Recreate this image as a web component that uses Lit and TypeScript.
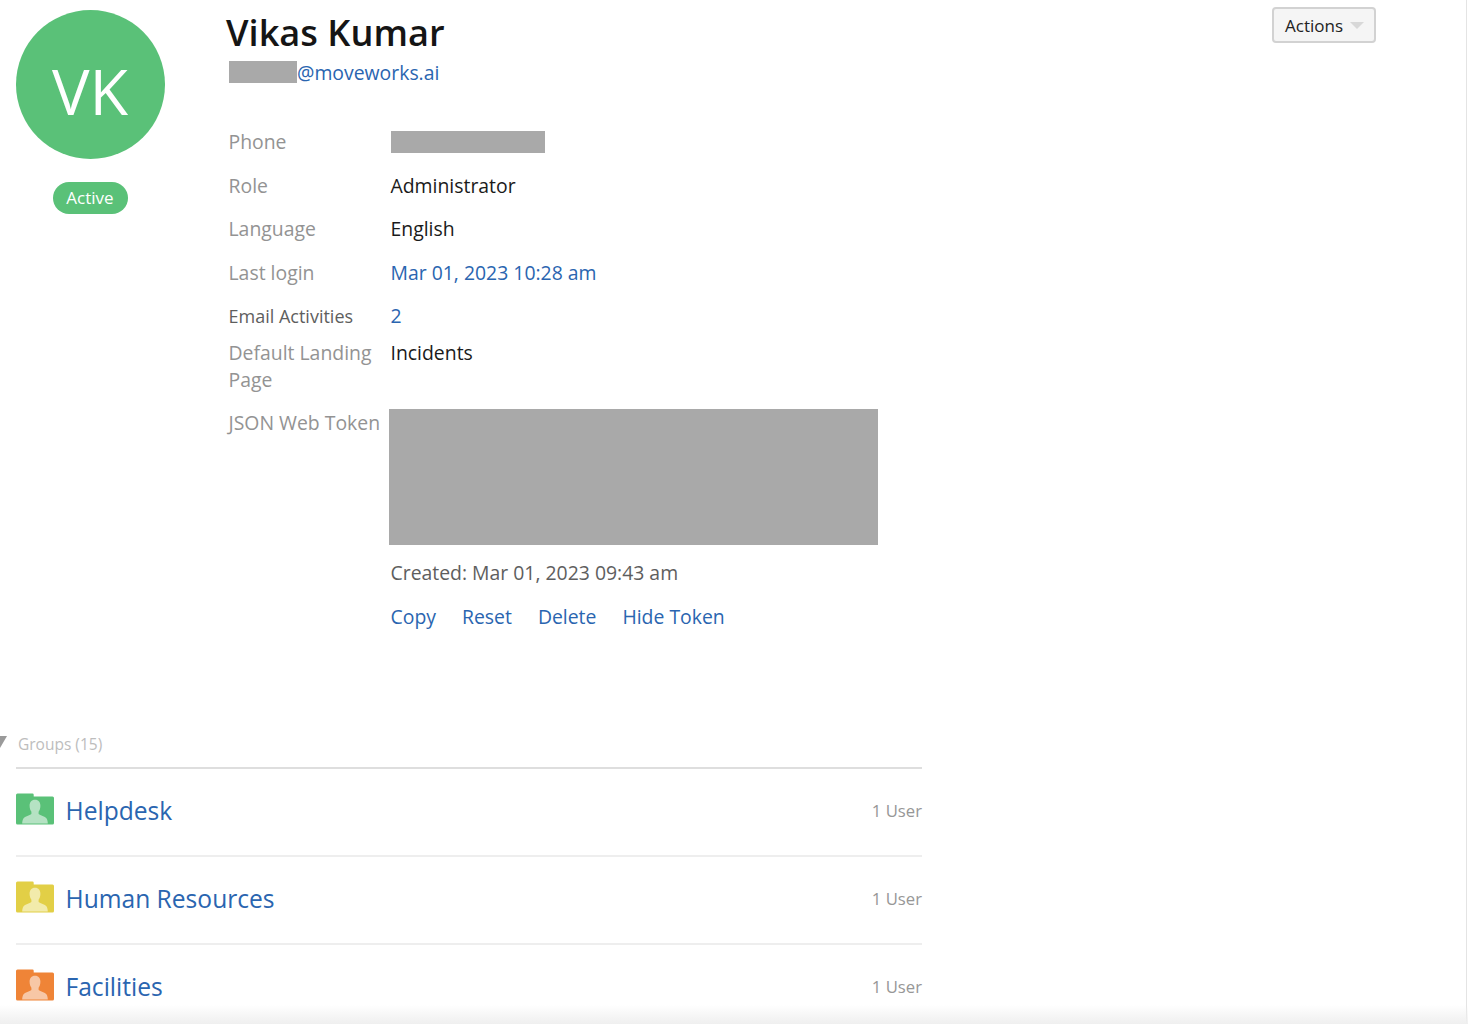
import { LitElement, html, css, svg } from "lit";
import { customElement } from "lit/decorators.js";

const folder = (c: string, p: string) => html`<svg class="folder" width="38" height="32" viewBox="0 0 38 32">
  <path fill=${c} d="M1.5 0.5H16.5Q17.7 0.5 17.7 1.7V3.5H36.5Q38 3.5 38 5V30Q38 31.5 36.5 31.5H1.5Q0 31.5 0 30V2Q0 0.5 1.5 0.5Z"/>
  ${svg`<path fill=${p} d="M19 6.8C15.4 6.8 13.6 9.4 13.6 12.8C13.6 15.2 14.3 17.4 15.4 18.8V21C13.6 22.6 9 23.2 7.4 25.6C6.7 26.8 6.2 28.4 6.2 30.6H31.8C31.8 28.4 31.3 26.8 30.6 25.6C29 23.2 24.4 22.6 22.6 21V18.8C23.7 17.4 24.4 15.2 24.4 12.8C24.4 9.4 22.6 6.8 19 6.8Z"/>`}
</svg>`;

@customElement("app-root")
export class AppRoot extends LitElement {
  static styles = css`
    :host { display: block; position: relative; height: 1024px; overflow: hidden; background: #fff;
      font-family: "Open Sans", "Liberation Sans", sans-serif; color: #1a1a1a; font-size: 19.4px; }
    .edge { position: absolute; top: 0; right: 1px; bottom: 0; width: 1.5px; background: #e4e4e4; }
    .fade { position: absolute; left: 0; right: 0; bottom: 0; height: 19px;
      background: linear-gradient(to bottom, rgba(240,240,240,0), #efefef); }
    a { color: #2a65b0; text-decoration: none; }
    .top { display: flex; height: 734px; }
    .side { flex: none; width: 148px; margin-right: 62px; padding: 10px 0 0 16px;
      display: flex; flex-direction: column; align-items: center; }
    .avatar { width: 149px; height: 149px; box-sizing: border-box; padding-top: 12px; border-radius: 50%;
      background: #5ac178; color: #fff; font-size: 63px;
      display: flex; align-items: center; justify-content: center; flex: none; }
    .status { margin-top: 23px; width: 75px; height: 32px; box-sizing: border-box; padding-bottom: 1px;
      border-radius: 16px; background: #5ac178; color: #fff;
      font-size: 17px; display: flex; align-items: center; justify-content: center; }
    .info { width: 800px; flex: none; }
    h1 { margin: 8px 0 0 0; font-size: 36.2px; line-height: 48px; font-weight: 600; color: #151515; }
    .mail { margin: 2px 0 0 3px; display: flex; align-items: center; height: 28px; }
    .mask { background: #a9a9a9; display: block; }
    .mail .mask { width: 68px; height: 22px; }
    .rows { margin: 34px 0 0 2.5px; display: grid; grid-template-columns: 162px 1fr; }
    .l { color: #939393; line-height: 27.5px; padding: 8px 0; }
    .v { line-height: 27.5px; padding: 8px 0; color: #1a1a1a; }
    .l.dark { color: #5e5e5e; font-size: 18px; padding: 9px 0 7px; }
    .l.tall, .v.tall { line-height: 27px; padding: 1px 0 8px; }
    .phone { width: 154px; height: 22px; margin-top: 3px; }
    .jwt { padding-top: 8.5px; margin-left: -1.5px; }
    .jwt .mask { width: 489px; height: 135.5px; }
    .created { color: #5e5e5e; line-height: 27.5px; margin-top: 14px; }
    .acts { display: flex; gap: 26px; line-height: 27.5px; margin-top: 16.5px; }
    .actions { position: absolute; left: 1272px; top: 7px; width: 104px; height: 36px; box-sizing: border-box;
      border: 2px solid #d2d2d2; border-radius: 4px; background: #f5f5f5; font-size: 17px; color: #222;
      display: flex; align-items: center; padding: 1px 0 0 11px; gap: 7px; }
    .caret { width: 0; height: 0; border: 7px solid transparent; border-top: 7px solid #d8d8d8; border-bottom: 0; }
    .groups { width: 922px; }
    .ghead { position: relative; margin-left: 16px; height: 35px; box-sizing: border-box; padding-left: 2px;
      border-bottom: 2px solid #dedede; color: #bdbdbd; font-size: 15.5px; line-height: 20px; }
    .tri { position: absolute; left: -16px; top: 2px; width: 0; height: 0;
      border-right: 7px solid transparent; border-top: 12px solid #9a9a9a; }
    .grow { margin-left: 16px; height: 88px; box-sizing: border-box; padding-bottom: 3px;
      border-bottom: 2px solid #eeeeee; display: flex; align-items: center; }
    .grow:last-child { border-bottom-color: transparent; }
    .folder { flex: none; margin-right: 11.5px; margin-top: -3px; }
    .grow a { font-size: 24.6px; flex: 1; }
    .count { color: #979797; font-size: 16.7px; }
  `;

  render() {
    return html`
      <div class="top">
        <div class="side">
          <div class="avatar">VK</div>
          <div class="status">Active</div>
        </div>
        <div class="info">
          <h1>Vikas Kumar</h1>
          <div class="mail"><span class="mask"></span><a href="#">@moveworks.ai</a></div>
          <div class="rows">
            <div class="l">Phone</div><div class="v"><span class="mask phone"></span></div>
            <div class="l">Role</div><div class="v">Administrator</div>
            <div class="l">Language</div><div class="v">English</div>
            <div class="l">Last login</div><div class="v"><a href="#">Mar 01, 2023 10:28 am</a></div>
            <div class="l dark">Email Activities</div><div class="v"><a href="#">2</a></div>
            <div class="l tall">Default Landing Page</div><div class="v tall">Incidents</div>
            <div class="l">JSON Web Token</div>
            <div class="jwt"><span class="mask"></span></div>
            <div></div>
            <div>
              <div class="created">Created: Mar 01, 2023 09:43 am</div>
              <div class="acts"><a href="#">Copy</a><a href="#">Reset</a><a href="#">Delete</a><a href="#">Hide Token</a></div>
            </div>
          </div>
        </div>
      </div>
      <div class="actions">Actions<span class="caret"></span></div>
      <div class="groups">
        <div class="ghead"><span class="tri"></span>Groups (15)</div>
        <div class="grow">${folder("#5ac178", "#b5e2c3")}<a href="#">Helpdesk</a><span class="count">1 User</span></div>
        <div class="grow">${folder("#e2cf46", "#f2ebab")}<a href="#">Human Resources</a><span class="count">1 User</span></div>
        <div class="grow">${folder("#ef8437", "#f7c7a6")}<a href="#">Facilities</a><span class="count">1 User</span></div>
      </div>
      <div class="edge"></div>
      <div class="fade"></div>
    `;
  }
}
